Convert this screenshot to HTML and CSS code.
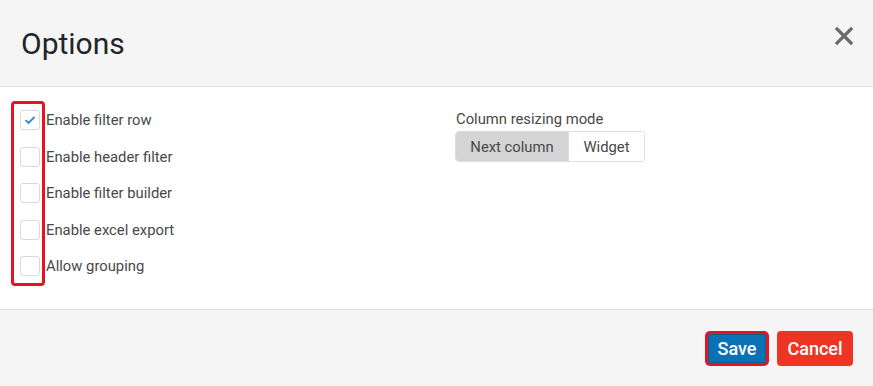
FILE: index.html
```html
<!DOCTYPE html>
<html lang="en">
<head>
  <meta charset="UTF-8" />
  <title>Options</title>
  <link rel="stylesheet" href="styles.css">
</head>
<body>
  <div class="modal">
    <header class="modal-header">
      <h1>Options</h1>
      <button class="close-btn" aria-label="Close">
        <svg width="18" height="18" viewBox="0 0 18 18">
          <path d="M2 2 L16 16 M16 2 L2 16" stroke="#6b6b6b" stroke-width="3.2" stroke-linecap="square" />
        </svg>
      </button>
    </header>

    <section class="modal-body">
      <div class="options-list">
        <div class="highlight"></div>
        <label class="option">
          <span class="check checked">
            <svg width="14" height="14" viewBox="0 0 14 14">
              <path d="M2.5 7.2 L5.6 10 L11.5 4" fill="none" stroke="#3a86c8" stroke-width="1.8" />
            </svg>
          </span>
          <span>Enable filter row</span>
        </label>
        <label class="option"><span class="check"></span><span>Enable header filter</span></label>
        <label class="option"><span class="check"></span><span>Enable filter builder</span></label>
        <label class="option"><span class="check"></span><span>Enable excel export</span></label>
        <label class="option"><span class="check"></span><span>Allow grouping</span></label>
      </div>

      <div class="resize-mode">
        <div class="field-label">Column resizing mode</div>
        <div class="btn-group">
          <button class="active">Next column</button>
          <button class="plain">Widget</button>
        </div>
      </div>
    </section>

    <footer class="modal-footer">
      <button class="btn btn-save">Save</button>
      <button class="btn btn-cancel">Cancel</button>
    </footer>
  </div>
</body>
</html>
```

FILE: styles.css
```css
body {
  margin: 0;
  font-family: Roboto, "Liberation Sans", sans-serif;
  background: #fff;
}
.modal {
  width: 873px;
  height: 386px;
  display: flex;
  flex-direction: column;
}
.modal-header {
  height: 87px;
  background: #f5f5f5;
  border-bottom: 1px solid #e0e0e4;
  display: flex;
  align-items: center;
  justify-content: space-between;
  padding: 0 20px 0 21px;
  box-sizing: border-box;
  flex-shrink: 0;
}
.modal-header h1 {
  margin: 0;
  font-size: 30px;
  font-weight: 400;
  color: #212529;
  padding-top: 1px;
}
.close-btn {
  border: none;
  background: none;
  padding: 0;
  margin-top: -14px;
  cursor: pointer;
  display: flex;
}
.modal-body {
  height: 222px;
  display: flex;
  flex-shrink: 0;
  box-sizing: border-box;
}
.options-list {
  position: relative;
  width: 435px;
  padding: 23px 0 0 20px;
  display: flex;
  flex-direction: column;
  gap: 16.5px;
}
.highlight {
  position: absolute;
  left: 11px;
  top: 14px;
  width: 28px;
  height: 179px;
  border: 3px solid #e31423;
  border-radius: 4px;
}
.option {
  display: flex;
  align-items: center;
  height: 20px;
  font-size: 14.8px;
  line-height: 22px;
  color: #484848;
}
.check {
  width: 18px;
  height: 18px;
  border: 1px solid #dadada;
  border-radius: 3px;
  background: #fff;
  margin-right: 6px;
  display: flex;
  align-items: center;
  justify-content: center;
  flex-shrink: 0;
}
.resize-mode {
  padding-top: 23px;
}
.field-label {
  font-size: 14.8px;
  color: #484848;
  margin: 0 0 3px 1px;
}
.btn-group {
  display: inline-flex;
  border: 1px solid #ddd;
  border-radius: 4px;
  overflow: hidden;
  height: 31px;
  box-sizing: border-box;
}
.btn-group button {
  border: none;
  background: #fff;
  font-family: Roboto, sans-serif;
  font-size: 14.8px;
  color: #484848;
  padding: 0;
}
.btn-group .active {
  background: #d4d4d4;
  width: 112px;
}
.btn-group .plain {
  border-left: 1px solid #ddd;
  width: 76px;
}
.modal-footer {
  flex: 1;
  background: #f5f5f5;
  border-top: 1px solid #dcdcdc;
  display: flex;
  align-items: center;
  justify-content: flex-end;
  gap: 8px;
  padding: 0 20px 0 0;
}
.btn {
  font-family: Roboto, sans-serif;
  font-size: 18px;
  font-weight: 500;
  color: #fff;
  border: none;
  border-radius: 4px;
  height: 35px;
  cursor: pointer;
}
.btn-save {
  background: #0a72b4;
  width: 58px;
  height: 29px;
  padding: 0;
  border: 1px solid #165f8c;
  box-shadow: 0 0 0 3px #e31423;
  border-radius: 2px;
  margin-right: 3px;
}
.btn-cancel {
  background: #ee3524;
  width: 76px;
  padding: 0;
}
```
